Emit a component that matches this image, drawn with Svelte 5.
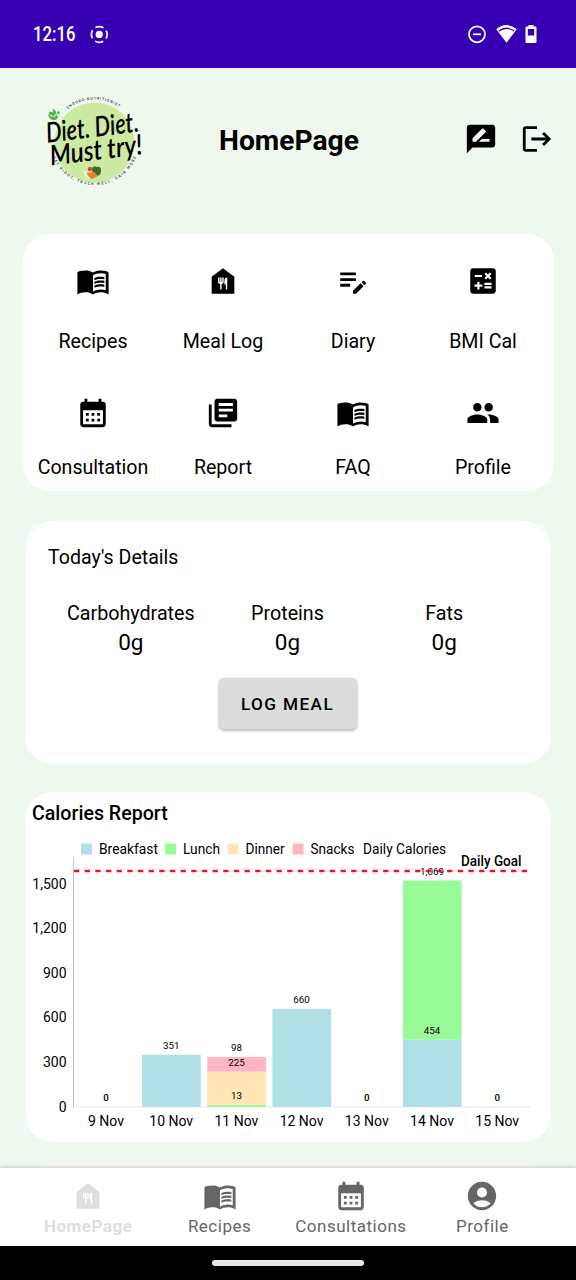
<script>
  const icons = {
    book: 'M21 5c-1.11-.35-2.33-.5-3.5-.5-1.95 0-4.05.4-5.5 1.5-1.45-1.1-3.55-1.5-5.5-1.5-1.17 0-2.39.15-3.500.5Q1.600 5.300 1 5.800V21.500C2.600 20.500 4.550 20 6.500 20s4.050.4 5.500 1.500c1.350-.85 3.800-1.500 5.500-1.500 1.650 0 4.100.4 5.500 1.500V6c-.6-.45-1.250-.75-2-1zm0 13.500c-1.100-.35-2.300-.5-3.500-.5-1.700 0-4.150.65-5.500 1.500V8c1.350-.85 3.800-1.500 5.500-1.500 1.200 0 2.400.15 3.500.5v11.500zM17.500 10.500c.88 0 1.730.09 2.500.26V9.240c-.79-.15-1.640-.24-2.500-.24-1.700 0-3.240.29-4.500.83v1.660c1.130-.64 2.700-.99 4.500-.99zM13 12.490v1.660c1.130-.64 2.700-.99 4.500-.99.88 0 1.730.09 2.500.26V11.900c-.79-.15-1.640-.24-2.500-.24-1.700 0-3.240.3-4.500.83zM17.500 14.330c-1.700 0-3.240.29-4.500.83v1.660c1.130-.64 2.700-.99 4.500-.99.88 0 1.730.09 2.500.26v-1.520c-.79-.16-1.640-.24-2.500-.24z',
    house: 'M12 3L4 9v12h16V9L12 3zM12.500 12.500c0 .83-.67 1.500-1.500 1.500v4h-1v-4c-.83 0-1.500-.67-1.500-1.500v-3h1v3h.5v-3h1v3h.5v-3h1v3zM15 18h-1v-3.500h-1v-3c0-1.100.9-2 2-2V18z',
    note: 'M3 10h11v2H3v-2zm0-2h11V6H3v2zm0 8h7v-2H3v2zm15.010-3.130.71-.71c.39-.39 1.020-.39 1.410 0l.71.71c.39.39.39 1.020 0 1.410l-.71.71-2.120-2.120zm-.71.71-5.300 5.300V21h2.120l5.300-5.300-2.120-2.120z',
    calc: 'M19 3H5c-1.100 0-2 .9-2 2v14c0 1.100.9 2 2 2h14c1.100 0 2-.9 2-2V5c0-1.100-.9-2-2-2zm-5.970 4.060L14.090 6l1.410 1.410L16.910 6l1.060 1.060-1.410 1.410 1.410 1.410-1.060 1.060-1.410-1.400-1.410 1.410-1.060-1.060 1.410-1.410-1.410-1.420zm-6.780.66h5v1.500h-5v-1.500zM11.500 16h-2v2H8v-2H6v-1.500h2v-2h1.500v2h2V16zm6.500 1.250h-5v-1.500h5v1.500zm0-2.500h-5v-1.500h5v1.500z',
    calendar: 'M19 4h-1V2h-2v2H8V2H6v2H5c-1.110 0-1.990.9-1.990 2L3 20c0 1.100.89 2 2 2h14c1.100 0 2-.9 2-2V6c0-1.100-.9-2-2-2zm0 16H5V10h14v10zM9 14H7v-2h2v2zm4 0h-2v-2h2v2zm4 0h-2v-2h2v2zm-8 4H7v-2h2v2zm4 0h-2v-2h2v2zm4 0h-2v-2h2v2z',
    report: 'M4 6H2v14c0 1.100.9 2 2 2h14v-2H4V6zm16-4H8c-1.100 0-2 .9-2 2v12c0 1.100.9 2 2 2h12c1.100 0 2-.9 2-2V4c0-1.100-.9-2-2-2zm-1 9H9V9h10v2zm-4 4H9v-2h6v2zm4-8H9V5h10v2z',
    people: 'M16 11c1.660 0 2.990-1.340 2.990-3S17.660 5 16 5c-1.660 0-3 1.340-3 3s1.340 3 3 3zm-8 0c1.660 0 2.990-1.340 2.990-3S9.660 5 8 5C6.340 5 5 6.340 5 8s1.340 3 3 3zm0 2c-2.330 0-7 1.170-7 3.500V19h14v-2.500c0-2.330-4.670-3.500-7-3.500zm8 0c-.29 0-.62.02-.97.05 1.160.84 1.970 1.970 1.970 3.450V19h6v-2.500c0-2.330-4.670-3.500-7-3.500z',
    review: 'M20 2H4c-1.100 0-1.990.9-1.990 2L2 22l4-4h14c1.100 0 2-.9 2-2V4c0-1.100-.9-2-2-2zM6 14v-2.470l6.880-6.880c.2-.2.51-.2.71 0l1.770 1.770c.2.2.2.51 0 .71L8.470 14H6zm12 0h-7.500l2-2H18v2z',
    logout: 'M17 7l-1.410 1.410L18.170 11H8v2h10.170l-2.580 2.580L17 17l5-5zM4 5h8V3H4c-1.100 0-2 .9-2 2v14c0 1.100.9 2 2 2h8v-2H4V5z',
    account: 'M12 2C6.480 2 2 6.480 2 12s4.480 10 10 10 10-4.480 10-10S17.520 2 12 2zm0 4c1.930 0 3.500 1.570 3.500 3.500S13.930 13 12 13s-3.500-1.570-3.500-3.500S10.070 6 12 6zm0 14c-2.030 0-4.430-.82-6.140-2.880C7.550 15.800 9.680 15 12 15s4.450.8 6.140 2.120C16.430 19.180 14.030 20 12 20z'
  };

  const menu = [
    ['book', 'Recipes'], ['house', 'Meal Log'], ['note', 'Diary'], ['calc', 'BMI Cal'],
    ['calendar', 'Consultation'], ['report', 'Report'], ['book', 'FAQ'], ['people', 'Profile']
  ];
  const nutrients = ['Carbohydrates', 'Proteins', 'Fats'];
  const tabs = [['house', 'HomePage'], ['book', 'Recipes'], ['calendar', 'Consultations'], ['account', 'Profile']];

  const blue = '#b0dfe5';
  const green = '#98fb98';
  const sand = '#ffe4b5';
  const pink = '#ffb6c1';
  const legend = [
    [81, 99, 59, blue, 'Breakfast'], [165, 183, 37, green, 'Lunch'], [227.5, 245.5, 39, sand, 'Dinner'],
    [292.5, 310.5, 44, pink, 'Snacks'], [0, 363, 83, null, 'Daily Calories']
  ];
  const base = 1107;
  const unit = 44.6 / 300;
  const step = 65.2;
  const ticks = [0, 300, 600, 900, 1200, 1500];
  const days = [
    { label: '9 Nov', zero: true, parts: [] },
    { label: '10 Nov', parts: [[351, blue, '351']] },
    { label: '11 Nov', parts: [[13, green, '13'], [225, sand, '225'], [98, pink, '98']] },
    { label: '12 Nov', parts: [[660, blue, '660']] },
    { label: '13 Nov', zero: true, parts: [] },
    { label: '14 Nov', parts: [[454, blue, '454'], [1069, green, '1,069']] },
    { label: '15 Nov', zero: true, parts: [] }
  ].map((d, i) => {
    let sum = 0;
    const parts = d.parts.map(([v, fill, text]) => {
      sum += v;
      return { y: base - sum * unit, h: v * unit, fill, text };
    });
    return { ...d, parts, cx: 106 + i * step };
  });
</script>

{#snippet icon(name)}
  <svg class="icon" viewBox="0 0 24 24"><path fill-rule="evenodd" d={icons[name]} /></svg>
{/snippet}

<div class="screen">
  <div class="status">
    <svg class="time" viewBox="0 0 57 24"><text x="0" y="19" textLength="42.5" lengthAdjust="spacingAndGlyphs">12:16</text></svg>
    <svg class="rec" viewBox="0 0 20 20" fill="none" stroke="#fff" stroke-width="1.8">
      <circle cx="10" cy="10.500" r="3.9" fill="#fff" stroke="none" />
      <circle cx="10" cy="10.500" r="8.5" stroke-dasharray="9.2 4.15" stroke-dashoffset="4.6" />
    </svg>
    <div class="right">
      <svg width="18" height="20" viewBox="0 0 18 20" fill="none" stroke="#fff" stroke-width="1.7">
        <circle cx="9" cy="10.300" r="8" /><path d="M5 10.300h8" />
      </svg>
      <svg width="21" height="20" viewBox="0 0 21 20">
        <path fill="#fff" d="M.3 5.2Q10.5-3 20.7 5.2L10.5 18.8z" />
        <path d="M2.8 7.1Q10.5 1.4 18.2 7.1" fill="none" stroke="#3700b3" stroke-width="1.3" />
      </svg>
      <svg width="12" height="20" viewBox="0 0 12 20">
        <path fill="#fff" fill-rule="evenodd" d="M3.5 1h5v1.500H10.200q1.300 0 1.300 1.300V17.700q0 1.300-1.300 1.300H1.800Q.5 19 .5 17.700V3.800Q.5 2.500 1.800 2.500h1.700zM2.800 5v6.500h6.400V5z" />
      </svg>
    </div>
  </div>

  <header>
    <svg class="logo" viewBox="30 85 130 115">
      <defs>
        <path id="arc-top" d="M52 142A42.5 42.5 0 0 1 137 142" />
        <path id="arc-bottom" d="M49.500 140A45 45 0 0 0 139.500 140" />
      </defs>
      <circle cx="94.5" cy="142.5" r="40" fill="#cdeaa2" />
      <text class="ring" text-anchor="middle"><textPath href="#arc-top" startOffset="49%" textLength="55">ENDORO NUTRITIONIST</textPath></text>
      <text class="ring" text-anchor="middle"><textPath href="#arc-bottom" startOffset="50%" textLength="106">EAT RIGHT, TRACK WELL, GAIN MORE</textPath></text>
      <path d="M49 112q5-1 6 5q-6 1-6-5M53 109q4 1 3 7q-4-2-3-7M57 117q-1-6 2-6q2 3-2 6M48 114q1 6 6 6q4 0 5-6q-5-1-6 4q-1-4-5-4" fill="#4fb648" />
      <g transform="translate(94 138) rotate(-7)">
        <text class="script" x="-47" y="-1" textLength="93" lengthAdjust="spacingAndGlyphs">Diet. Diet.</text>
        <text class="script" x="-46" y="22" textLength="93" lengthAdjust="spacingAndGlyphs">Must try!</text>
      </g>
      <path d="M92 169q1-4 5-2q4-1 4 4q0 5-5 5q-4-2-4-7" fill="#3b6b28" />
      <circle cx="90" cy="169" r="2.200" fill="#d94b2b" />
      <path d="M87 173l7-1 4 4-6 3q-4-1-5-6z" fill="#ef7d31" />
      <path d="M84.500 171q1 6 5 7" fill="none" stroke="#fff" stroke-width="1.500" />
    </svg>
    <h1>HomePage</h1>
    <div class="actions">{@render icon('review')}{@render icon('logout')}</div>
  </header>

  <main>
    <section class="menu">
      {#each menu as [name, label]}
        <div class="cell">{@render icon(name)}<span>{label}</span></div>
      {/each}
    </section>

    <section class="card today">
      <h2>Today's Details</h2>
      <div class="nutrients">
        {#each nutrients as n}
          <div class="nutrient"><span>{n}</span><b>0g</b></div>
        {/each}
      </div>
      <button>LOG MEAL</button>
    </section>

    <section class="card report">
      <h2>Calories Report</h2>
      <svg class="chart" viewBox="25 832 526 296">
        {#each legend as [sx, tx, w, fill, text]}
          {#if fill}<rect x={sx} y="843.5" width="11" height="11" {fill} />{/if}
          <text x={tx} y="854" textLength={w} lengthAdjust="spacingAndGlyphs">{text}</text>
        {/each}
        <path d="M73.5 858V1107" stroke="#c4c4c4" />
        <path d="M73 1106.900H530" stroke="#e6e6e6" />
        {#each ticks as t}
          <text x="66.500" y={1111.5 - t * unit} text-anchor="end">{t.toLocaleString('en-US')}</text>
        {/each}
        {#each days as d}
          {#each d.parts as p}
            <rect x={d.cx - 29.1} y={p.y} width="58.6" height={p.h} fill={p.fill} />
          {/each}
          {#each d.parts as p}
            <text class="value" x={d.cx} y={p.y - 6} text-anchor="middle">{p.text}</text>
          {/each}
          {#if d.zero}<text class="value zero" x={d.cx} y="1101" text-anchor="middle">0</text>{/if}
          <text x={d.cx} y="1126" text-anchor="middle">{d.label}</text>
        {/each}
        <path d="M74 871H530" stroke="#f01420" stroke-width="2.7" stroke-dasharray="5.33 5.33" />
        <text class="goal" x="461" y="865.500" textLength="60.5" lengthAdjust="spacingAndGlyphs">Daily Goal</text>
      </svg>
    </section>

    <section class="card next"></section>
  </main>

  <nav>
    {#each tabs as [name, label], i}
      <div class="tab" class:active={i === 0}>{@render icon(name)}<span>{label}</span></div>
    {/each}
  </nav>
  <div class="gesture"><div class="pill"></div></div>
</div>

<style>
  :global(body) { margin: 0; }
  .screen {
    width: 576px; height: 1280px; overflow: hidden; display: flex; flex-direction: column;
    background: #eef8ef; color: #000; font-family: Roboto, sans-serif;
  }
  .status {
    height: 68px; flex: none; box-sizing: border-box; padding: 0 39px 0 33px;
    display: flex; align-items: center; background: #3700b3; color: #fff;
  }
  .time { font-size: 19.500px; font-weight: 500; width: 57px; height: 24px; fill: #fff; }
  .rec { width: 18.500px; height: 20px; }
  .right { margin-left: auto; display: flex; gap: 10px; align-items: center; }
  .right svg:last-child { margin-left: -2px; }
  header { height: 166px; flex: none; display: flex; align-items: flex-start; padding: 0 22px 0 30px; }
  .logo { width: 130px; height: 115px; margin-top: 17px; overflow: visible; }
  .ring { font-size: 3.700px; font-weight: 500; fill: #333; }
  .script { font-family: Lato, sans-serif; font-style: italic; font-weight: 600; font-size: 28px; }
  h1 { margin: 56px 0 0 59px; font-size: 28.200px; line-height: 33px; font-weight: 700; }
  .actions { margin: 54px 0 0 auto; display: flex; gap: 22px; }
  .icon { width: 34px; height: 34px; display: block; fill: currentColor; flex: none; }
  main { flex: 1; min-height: 0; overflow: hidden; display: flex; flex-direction: column; align-items: center; }
  section { box-sizing: border-box; flex: none; background: #fff; }
  .menu {
    width: 531px; height: 257px; border-radius: 27px; padding: 29.500px 5.500px 0;
    display: grid; grid-template-columns: repeat(4, 130px); grid-template-rows: 132px 95px;
  }
  .cell { display: flex; flex-direction: column; align-items: center; font-size: 19.600px; line-height: 24px; gap: 32.500px; }
  .cell:nth-child(n + 5) { gap: 26px; }
  .card { width: 526px; border-radius: 28px; overflow: hidden; }
  h2 { margin: 0; font-size: 19.600px; line-height: 24px; font-weight: 400; }
  .today { height: 243px; margin-top: 30px; padding: 25px 24px 0 23px; display: flex; flex-direction: column; align-items: center; }
  .today h2 { align-self: flex-start; }
  .nutrients { width: 470px; display: flex; margin-top: 31px; }
  .nutrient { flex: 1; display: flex; flex-direction: column; align-items: center; font-size: 19.700px; line-height: 26px; }
  .nutrient b { font-weight: 400; font-size: 22.500px; line-height: 31px; }
  button {
    width: 138px; height: 51px; margin: 20px 0 0; padding: 0; border: 0; border-radius: 5px; background: #dcdcdc;
    color: #000; font: 500 17.200px Roboto, sans-serif; letter-spacing: 1.400px;
    box-shadow: 0 2px 3px rgba(0, 0, 0, .24), 0 0 2px rgba(0, 0, 0, .14);
  }
  .report { height: 350px; margin-top: 28px; padding-top: 10px; }
  .report h2 { font-weight: 500; padding-left: 7px; height: 30px; }
  .chart { display: block; width: 526px; height: 296px; background: #fff; font-size: 14px; }
  .value { font-size: 9.800px; }
  .zero { font-weight: 500; }
  .goal { font-weight: 500; }
  .next { height: 80px; margin-top: 21px; background: #fcf6f7; }
  nav {
    height: 78px; flex: none; box-sizing: border-box; padding: 11px 28px 0 22.500px; display: flex;
    background: #fff; box-shadow: 0 -1px 4px rgba(0, 0, 0, .18); color: #666; position: relative;
  }
  .tab { flex: 1; display: flex; flex-direction: column; align-items: center; font-size: 17px; line-height: 20px; gap: 3px; letter-spacing: .5px; }
  .active { color: #dedede; font-weight: 700; }
  .gesture { height: 34px; flex: none; display: flex; align-items: center; justify-content: center; background: #000; position: relative; }
  .pill { width: 152px; height: 6px; border-radius: 3px; background: #e6e6e6; }
</style>
